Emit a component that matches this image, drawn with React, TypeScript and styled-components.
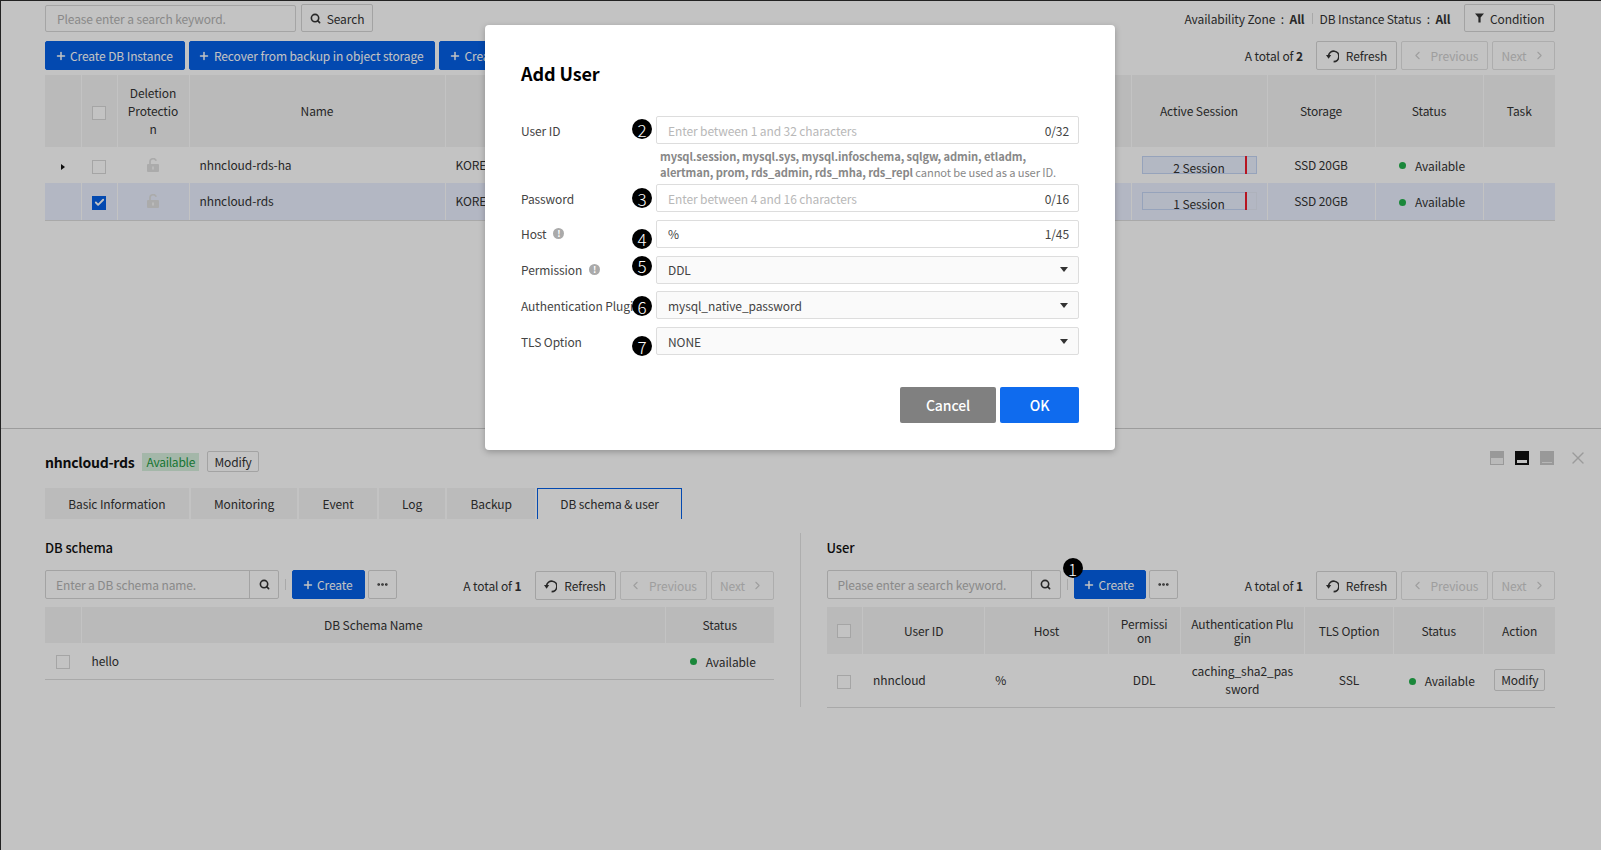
import React from "react";
import styled, { createGlobalStyle } from "styled-components";
import { Check, ChevronLeft, ChevronRight, Ellipsis, Plus, Search, X } from "lucide-react";

const GlobalStyle = createGlobalStyle`
  html, body { margin: 0; padding: 0; background: #fff; }
  body {
    font-family: "Noto Sans CJK KR", "Noto Sans", sans-serif;
    font-size: 12px;
    letter-spacing: -0.1px;
    color: #333;
  }
  button, input { letter-spacing: inherit; }
  * { box-sizing: border-box; }
`;

const FilterIcon = () => (
  <svg width="9" height="10" viewBox="0 0 9 10">
    <path d="M0 0.5h9L5.6 4.6V9.6H3.4V4.6z" fill="#333" />
  </svg>
);

const RefreshIcon = () => (
  <svg width="13" height="14" viewBox="0 0 13 14">
    <path d="M7.6 12.6A5.2 5.2 0 1 0 2.6 6.4" fill="none" stroke="#333" strokeWidth="1.7" />
    <path d="M0 6h5.2L2.6 9.8z" fill="#333" />
  </svg>
);

const LockIcon = () => (
  <svg width="12" height="14" viewBox="0 0 12 14" style={{ display: "block", margin: "0 auto" }}>
    <path d="M3 6.5V4a3.2 3.2 0 0 1 6.2-1.2" fill="none" stroke="#e0e0e0" strokeWidth="1.7" />
    <rect x="0" y="6" width="12" height="8" rx="1" fill="#e0e0e0" />
    <rect x="5" y="8.5" width="2" height="3" fill="#f4f4f4" />
  </svg>
);

const PanelIcon = ({ mode }: { mode: "top" | "mid" | "bottom" }) => {
  const frame = mode === "mid" ? "#111" : "#c8c8c8";
  return (
    <svg width="14" height="14" viewBox="0 0 14 14">
      <rect width="14" height="14" fill={frame} />
      {mode === "top" && <rect x="1" y="7" width="12" height="6" fill="#f4f4f4" />}
      {mode === "mid" && <rect x="2" y="9" width="10" height="3" fill="#fff" />}
      {mode === "bottom" && <rect x="2" y="11" width="10" height="1" fill="#eee" />}
    </svg>
  );
};

const Page = styled.div`
  position: relative;
  width: 1601px;
  height: 850px;
  overflow: hidden;
  border-top: 1px solid #222;
  border-left: 1px solid #222;
`;

const Dim = styled.div`
  position: absolute;
  inset: 0;
  z-index: 10;
  background: rgba(0, 0, 0, 0.235);
`;

const TopSection = styled.section`
  height: 428px;
  padding: 3px 46px 0 44px;
  border-bottom: 1px solid #ccc;
`;

const Toolbar = styled.div<{ $top?: number }>`
  display: flex;
  align-items: flex-start;
  gap: 4px;
  margin-top: ${(p) => p.$top ?? 0}px;
`;

const RightGroup = styled.div<{ $down?: number }>`
  display: flex;
  align-items: center;
  gap: 4px;
  margin-left: auto;
  margin-top: ${(p) => p.$down ?? 0}px;
`;

const SearchInput = styled.input<{ $w: number }>`
  width: ${(p) => p.$w}px;
  height: 27px;
  margin: 1px 1px 0 0;
  padding: 0 11px;
  border: 1px solid #d8d8d8;
  border-radius: 2px;
  background: transparent;
  font: inherit;
  outline: none;
  &::placeholder { color: #b4b4b4; opacity: 1; }
`;

const Button = styled.button<{ $primary?: boolean; $off?: boolean; $h?: number; $w?: number; $gap?: number }>`
  display: inline-flex;
  align-items: center;
  justify-content: center;
  gap: ${(p) => p.$gap ?? 3.5}px;
  width: ${(p) => (p.$w ? `${p.$w}px` : "auto")};
  height: ${(p) => p.$h ?? 29}px;
  padding: ${(p) => (p.$w ? "0" : p.$primary ? "0 11px 0 8.5px" : "0 9.5px")};
  border: 1px solid ${(p) => (p.$primary ? "#0560e7" : p.$off ? "#e2e2e2" : "#d6d6d6")};
  border-radius: 2px;
  background: ${(p) => (p.$primary ? "#0560e7" : "transparent")};
  color: ${(p) => (p.$primary ? "#fff" : p.$off ? "#cfcfcf" : "#333")};
  font: inherit;
  white-space: nowrap;
  svg { flex-shrink: 0; }
`;

const IconButton = styled(Button)`
  width: 29px;
  padding: 0;
`;

const FilterSummary = styled.div`
  display: flex;
  align-items: center;
  margin-right: 10px;
  span { margin: 0 5.5px; }
  i { width: 1px; height: 11px; margin: 0 7px; background: #ddd; }
`;

const Total = styled.span`
  margin-right: 9px;
  b { font-weight: 700; }
`;

const Table = styled.table<{ $top?: number; $breakAll?: boolean }>`
  width: 100%;
  margin-top: ${(p) => p.$top ?? 0}px;
  table-layout: fixed;
  border-collapse: collapse;
  word-break: ${(p) => (p.$breakAll ? "break-all" : "normal")};
`;

const HeadRow = styled.tr<{ $h: number; $lh: number }>`
  height: ${(p) => p.$h}px;
  line-height: ${(p) => p.$lh}px;
`;

const Th = styled.th`
  padding: 0 10px;
  background: #f3f3f3;
  border-left: 1px solid #fff;
  font-weight: 400;
  text-align: center;
  overflow-wrap: anywhere;
  &:first-child { border-left: 0; }
`;

const Row = styled.tr<{ $h: number; $on?: boolean }>`
  height: ${(p) => p.$h}px;
  line-height: 18px;
  background: ${(p) => (p.$on ? "#eaf0ff" : "#fff")};
`;

const Td = styled.td<{ $center?: boolean; $last?: boolean }>`
  padding: 0 10px;
  border-left: 1px solid #fff;
  border-bottom: ${(p) => (p.$last ? "1px solid #ddd" : "0")};
  text-align: ${(p) => (p.$center ? "center" : "left")};
  overflow-wrap: anywhere;
  &:first-child { border-left: 0; }
`;

const StatusCell = styled(Td)`
  padding: 0;
  text-align: center;
`;

const CheckBox = styled.span<{ $on?: boolean }>`
  display: inline-flex;
  align-items: center;
  justify-content: center;
  width: 14px;
  height: 14px;
  vertical-align: middle;
  border: 1px solid ${(p) => (p.$on ? "#0560e7" : "#d8d8d8")};
  background: ${(p) => (p.$on ? "#0560e7" : "#fff")};
  color: #fff;
`;

const Caret = styled.span`
  display: inline-block;
  border-left: 4px solid #111;
  border-top: 3.5px solid transparent;
  border-bottom: 3.5px solid transparent;
`;

const StatusText = styled.span`
  display: inline-flex;
  align-items: center;
  gap: 9px;
  margin-left: 6px;
  white-space: nowrap;
  &::before {
    content: "";
    width: 7px;
    height: 7px;
    border-radius: 50%;
    background: #22b14c;
  }
`;

const SessionBar = styled.div`
  position: relative;
  height: 18px;
  border: 1px solid #e4e9f6;
  text-align: center;
  line-height: 22px;
  font-size: 12px;
`;

const SessionFill = styled.div`
  position: absolute;
  top: -1px;
  bottom: -1px;
  left: -1px;
  border: 1px solid #c4d5f5;
  background: #ebf1ff;
`;

const SessionText = styled.span`
  position: relative;
`;

const SessionMark = styled.div`
  position: absolute;
  top: -1px;
  bottom: -1px;
  width: 2px;
  background: #f01c2c;
`;

const Lower = styled.section`
  padding-top: 22px;
`;

const DetailHead = styled.div`
  display: flex;
  align-items: center;
  gap: 8px;
  height: 21px;
  padding: 0 16px 0 44px;
`;

const DetailTitle = styled.h2`
  margin: 0;
  font-size: 14px;
  font-weight: 700;
  letter-spacing: -0.25px;
  color: #111;
`;

const Badge = styled.span`
  padding: 0 4px;
  line-height: 18px;
  letter-spacing: -0.25px;
  background: #d7f0dd;
  color: #1d9a44;
`;

const DetailIcons = styled.div`
  display: flex;
  align-items: center;
  gap: 11px;
  margin: -7px 0 0 auto;
  svg:last-child { margin: 0 -3px 0 3px; }
`;

const Tabs = styled.div`
  display: flex;
  gap: 2px;
  height: 31px;
  margin: 16px 0 0 44px;
`;

const Tab = styled.div<{ $on?: boolean }>`
  display: flex;
  align-items: center;
  padding: 0 22.2px 2px;
  background: ${(p) => (p.$on ? "#fff" : "#f5f5f5")};
  border: 1px solid ${(p) => (p.$on ? "#0560e7" : "#f5f5f5")};
  border-bottom: 0;
`;

const Split = styled.div`
  display: flex;
  margin: 14px 46px 0 44px;
`;

const Pane = styled.div`
  flex: 1;
  min-width: 0;
`;

const PaneRule = styled.div`
  width: 1px;
  margin: 0 26px;
  height: 174px;
  background: #e4e4e4;
`;

const PaneTitle = styled.h3`
  margin: 0 0 7px;
  font-size: 13px;
  font-weight: 500;
  line-height: 30px;
  color: #111;
`;

const PaneBar = styled.div`
  display: flex;
  align-items: flex-start;
  height: 30px;
  margin-bottom: 7px;
`;

const SearchGroup = styled.div`
  display: flex;
  width: 234px;
  height: 29px;
  border: 1px solid #d6d6d6;
  border-radius: 2px;
`;

const SearchField = styled.input`
  flex: 1;
  min-width: 0;
  padding: 0 10px;
  border: 0;
  border-right: 1px solid #d6d6d6;
  background: transparent;
  font: inherit;
  outline: none;
  &::placeholder { color: #b4b4b4; opacity: 1; }
`;

const SearchButton = styled.div`
  display: flex;
  align-items: center;
  justify-content: center;
  width: 28px;
`;

const Tick = styled.i`
  width: 1px;
  height: 11px;
  margin: 9px 6px 0;
  background: #ddd;
`;

const CreateWrap = styled.div`
  position: relative;
  display: flex;
  gap: 3px;
`;

const Modal = styled.div`
  position: absolute;
  top: 24px;
  left: 484px;
  z-index: 20;
  width: 630px;
  height: 425px;
  padding: 36px 36px 0;
  border-radius: 4px;
  background: #fff;
  box-shadow: 0 2px 6px rgba(0, 0, 0, 0.25);
`;

const ModalTitle = styled.h1`
  margin: -1px 0 30px;
  font-size: 18px;
  font-weight: 700;
  line-height: 26px;
  color: #000;
`;

const Form = styled.div`
  display: flex;
  flex-direction: column;
  gap: 7.8px;
`;

const FormRow = styled.div`
  position: relative;
  display: grid;
  grid-template-columns: 135px 1fr;
  align-items: center;
  color: #444;
`;

const Label = styled.label`
  display: flex;
  align-items: center;
  gap: 7px;
  white-space: nowrap;
`;

const Info = styled.span`
  display: inline-flex;
  align-items: center;
  justify-content: center;
  width: 11px;
  height: 11px;
  border-radius: 50%;
  background: #aaa;
  color: #fff;
  font-size: 9px;
  font-weight: 700;
`;

const FieldBox = styled.div<{ $select?: boolean }>`
  display: flex;
  align-items: center;
  height: 28px;
  padding: 0 11px;
  border: 1px solid #ddd;
  border-radius: 2px;
  background: ${(p) => (p.$select ? "#fafafa" : "#fff")};
`;

const FieldInput = styled.input`
  flex: 1;
  min-width: 0;
  padding: 0;
  border: 0;
  background: transparent;
  font: inherit;
  color: #444;
  outline: none;
  &::placeholder { color: #b8b8b8; opacity: 1; }
`;

const Counter = styled.span`
  margin-left: 8px;
  margin-right: -2px;
`;

const Arrow = styled.span`
  margin-left: auto;
  margin-right: -1px;
  border-top: 5px solid #333;
  border-left: 4px solid transparent;
  border-right: 4px solid transparent;
`;

const Help = styled.p`
  margin: 4px 0 -3.8px 139px;
  font-size: 11.15px;
  line-height: 16px;
  color: #888;
  b { font-weight: 700; }
`;

const Actions = styled.div`
  display: flex;
  justify-content: flex-end;
  gap: 4px;
  margin-top: 32px;
`;

const ModalButton = styled.button<{ $primary?: boolean }>`
  height: 36px;
  width: ${(p) => (p.$primary ? 79 : 96)}px;
  border: 0;
  border-radius: 2px;
  background: ${(p) => (p.$primary ? "#0f6bee" : "#808080")};
  color: #fff;
  font: inherit;
  font-size: 14px;
  font-weight: 500;
`;

const Pin = styled.span<{ $left: number; $top: number }>`
  position: absolute;
  left: ${(p) => p.$left}px;
  top: ${(p) => p.$top}px;
  z-index: 30;
  display: flex;
  align-items: center;
  justify-content: center;
  width: 20px;
  height: 20px;
  border-radius: 50%;
  background: #000;
  color: #fff;
  font-size: 17px;
  font-weight: 300;
  line-height: 1;
`;

const PagerButtons = ({ total }: { total: number }) => (
  <>
    <Total>
      A total of <b>{total}</b>
    </Total>
    <Button $w={81} $gap={7}>
      <RefreshIcon /> <span>Refresh</span>
    </Button>
    <Button $off $w={87} $gap={7}>
      <ChevronLeft size={13} /> <span>Previous</span>
    </Button>
    <Button $off $w={63} $gap={6}>
      <span>Next</span> <ChevronRight size={13} />
    </Button>
  </>
);

const instances = [
  { name: "nhncloud-rds-ha", session: "2 Session", fill: 100, on: false, h: 36 },
  { name: "nhncloud-rds", session: "1 Session", fill: 90.5, on: true, h: 37 },
];

export default function App() {
  return (
    <Page>
      <GlobalStyle />
      <TopSection>
        <Toolbar>
          <SearchInput $w={251} placeholder="Please enter a search keyword." readOnly />
          <Button $h={28} $w={72} $gap={6}>
            <Search size={11} strokeWidth={3.5} /> <span>Search</span>
          </Button>
          <RightGroup>
            <FilterSummary>
              Availability Zone<span>:</span>
              <b>All</b>
              <i />
              DB Instance Status<span>:</span>
              <b>All</b>
            </FilterSummary>
            <Button $h={28} $gap={6}>
              <FilterIcon /> <span>Condition</span>
            </Button>
          </RightGroup>
        </Toolbar>
        <Toolbar $top={9}>
          <Button $primary>
            <Plus size={12} strokeWidth={3} /> <span>Create DB Instance</span>
          </Button>
          <Button $primary>
            <Plus size={12} strokeWidth={3} /> <span>Recover from backup in object storage</span>
          </Button>
          <Button $primary>
            <Plus size={12} strokeWidth={3} /> <span>Create Read Replica</span>
          </Button>
          <RightGroup>
            <PagerButtons total={2} />
          </RightGroup>
        </Toolbar>
        <Table $top={5}>
          <colgroup>
            <col width={36} />
            <col width={36} />
            <col width={72} />
            <col width={256} />
            <col width={455} />
            <col width={231} />
            <col width={136} />
            <col width={108} />
            <col width={108} />
            <col width={72} />
          </colgroup>
          <thead>
            <HeadRow $h={72} $lh={18}>
              <Th />
              <Th>
                <CheckBox />
              </Th>
              <Th>Deletion Protection</Th>
              <Th>Name</Th>
              <Th>Region</Th>
              <Th>CPU</Th>
              <Th>Active Session</Th>
              <Th>Storage</Th>
              <Th>Status</Th>
              <Th>Task</Th>
            </HeadRow>
          </thead>
          <tbody>
            {instances.map((el) => (
              <Row key={el.name} $h={el.h} $on={el.on}>
                <Td $center $last={el.on}>{!el.on && <Caret />}</Td>
                <Td $center $last={el.on}>
                  <CheckBox $on={el.on}>{el.on && <Check size={11} strokeWidth={4} />}</CheckBox>
                </Td>
                <Td $center $last={el.on}>
                  <LockIcon />
                </Td>
                <Td $last={el.on}>{el.name}</Td>
                <Td $last={el.on}>KOREA(Pangyo)</Td>
                <Td $last={el.on} />
                <Td $last={el.on}>
                  <SessionBar>
                    <SessionFill style={{ width: `calc(${el.fill}% + 2px)` }} />
                    <SessionText>{el.session}</SessionText>
                    <SessionMark style={{ left: "90.5%" }} />
                  </SessionBar>
                </Td>
                <Td $center $last={el.on}>SSD 20GB</Td>
                <StatusCell $last={el.on}>
                  <StatusText>Available</StatusText>
                </StatusCell>
                <Td $last={el.on} />
              </Row>
            ))}
          </tbody>
        </Table>
      </TopSection>

      <Lower>
        <DetailHead>
          <DetailTitle>nhncloud-rds</DetailTitle>
          <Badge>Available</Badge>
          <Button $h={21} $w={52}>Modify</Button>
          <DetailIcons>
            <PanelIcon mode="top" />
            <PanelIcon mode="mid" />
            <PanelIcon mode="bottom" />
            <X size={20} strokeWidth={1.6} color="#cbcbcb" />
          </DetailIcons>
        </DetailHead>
        <Tabs>
          <Tab>Basic Information</Tab>
          <Tab>Monitoring</Tab>
          <Tab>Event</Tab>
          <Tab>Log</Tab>
          <Tab>Backup</Tab>
          <Tab $on>DB schema &amp; user</Tab>
        </Tabs>
        <Split>
          <Pane>
            <PaneTitle>DB schema</PaneTitle>
            <PaneBar>
              <SearchGroup>
                <SearchField placeholder="Enter a DB schema name." readOnly />
                <SearchButton>
                  <Search size={11} strokeWidth={3.5} />
                </SearchButton>
              </SearchGroup>
              <Tick />
              <CreateWrap>
                <Button $primary>
                  <Plus size={12} strokeWidth={3} /> <span>Create</span>
                </Button>
                <IconButton>
                  <Ellipsis size={13} strokeWidth={3} />
                </IconButton>
              </CreateWrap>
              <RightGroup $down={1}>
                <PagerButtons total={1} />
              </RightGroup>
            </PaneBar>
            <Table>
              <colgroup>
                <col width={36} />
                <col />
                <col width={108} />
              </colgroup>
              <thead>
                <HeadRow $h={36} $lh={18}>
                  <Th />
                  <Th>DB Schema Name</Th>
                  <Th>Status</Th>
                </HeadRow>
              </thead>
              <tbody>
                <Row $h={36}>
                  <Td $center $last>
                    <CheckBox />
                  </Td>
                  <Td $last>hello</Td>
                  <StatusCell $last>
                    <StatusText>Available</StatusText>
                  </StatusCell>
                </Row>
              </tbody>
            </Table>
          </Pane>
          <PaneRule />
          <Pane>
            <PaneTitle>User</PaneTitle>
            <PaneBar>
              <SearchGroup>
                <SearchField placeholder="Please enter a search keyword." readOnly />
                <SearchButton>
                  <Search size={11} strokeWidth={3.5} />
                </SearchButton>
              </SearchGroup>
              <Tick />
              <CreateWrap>
                <Pin $left={-11} $top={-12}>1</Pin>
                <Button $primary>
                  <Plus size={12} strokeWidth={3} /> <span>Create</span>
                </Button>
                <IconButton>
                  <Ellipsis size={13} strokeWidth={3} />
                </IconButton>
              </CreateWrap>
              <RightGroup $down={1}>
                <PagerButtons total={1} />
              </RightGroup>
            </PaneBar>
            <Table $breakAll>
              <colgroup>
                <col width={36} />
                <col width={122} />
                <col width={123} />
                <col width={72} />
                <col width={124} />
                <col width={89} />
                <col width={90} />
                <col width={71} />
              </colgroup>
              <thead>
                <HeadRow $h={47} $lh={14}>
                  <Th>
                    <CheckBox />
                  </Th>
                  <Th>User ID</Th>
                  <Th>Host</Th>
                  <Th>Permission</Th>
                  <Th>Authentication Plugin</Th>
                  <Th>TLS Option</Th>
                  <Th>Status</Th>
                  <Th>Action</Th>
                </HeadRow>
              </thead>
              <tbody>
                <Row $h={53}>
                  <Td $center $last>
                    <CheckBox />
                  </Td>
                  <Td $last>nhncloud</Td>
                  <Td $last>%</Td>
                  <Td $center $last>DDL</Td>
                  <Td $center $last>caching_sha2_password</Td>
                  <Td $center $last>SSL</Td>
                  <StatusCell $last>
                    <StatusText>Available</StatusText>
                  </StatusCell>
                  <Td $center $last>
                    <Button $h={22} $w={51}>Modify</Button>
                  </Td>
                </Row>
              </tbody>
            </Table>
          </Pane>
        </Split>
      </Lower>

      <Dim />

      <Modal>
        <ModalTitle>Add User</ModalTitle>
        <Form>
          <div>
            <FormRow>
              <Label>User ID</Label>
              <FieldBox>
                <FieldInput placeholder="Enter between 1 and 32 characters" readOnly />
                <Counter>0/32</Counter>
              </FieldBox>
              <Pin $left={111} $top={3}>2</Pin>
            </FormRow>
            <Help>
              <b>mysql.session, mysql.sys, mysql.infoschema, sqlgw, admin, etladm,</b>
              <br />
              <b>alertman, prom, rds_admin, rds_mha, rds_repl</b> cannot be used as a user ID.
            </Help>
          </div>
          <FormRow>
            <Label>Password</Label>
            <FieldBox>
              <FieldInput placeholder="Enter between 4 and 16 characters" readOnly />
              <Counter>0/16</Counter>
            </FieldBox>
            <Pin $left={111} $top={4}>3</Pin>
          </FormRow>
          <FormRow>
            <Label>
              Host <Info>!</Info>
            </Label>
            <FieldBox>
              <FieldInput value="%" readOnly />
              <Counter>1/45</Counter>
            </FieldBox>
            <Pin $left={111} $top={9}>4</Pin>
          </FormRow>
          <FormRow>
            <Label>
              Permission <Info>!</Info>
            </Label>
            <FieldBox $select>
              DDL
              <Arrow />
            </FieldBox>
            <Pin $left={111} $top={0}>5</Pin>
          </FormRow>
          <FormRow>
            <Label>Authentication Plugin</Label>
            <FieldBox $select>
              mysql_native_password
              <Arrow />
            </FieldBox>
            <Pin $left={111} $top={5}>6</Pin>
          </FormRow>
          <FormRow>
            <Label>TLS Option</Label>
            <FieldBox $select>
              NONE
              <Arrow />
            </FieldBox>
            <Pin $left={111} $top={9}>7</Pin>
          </FormRow>
        </Form>
        <Actions>
          <ModalButton>Cancel</ModalButton>
          <ModalButton $primary>OK</ModalButton>
        </Actions>
      </Modal>
    </Page>
  );
}
